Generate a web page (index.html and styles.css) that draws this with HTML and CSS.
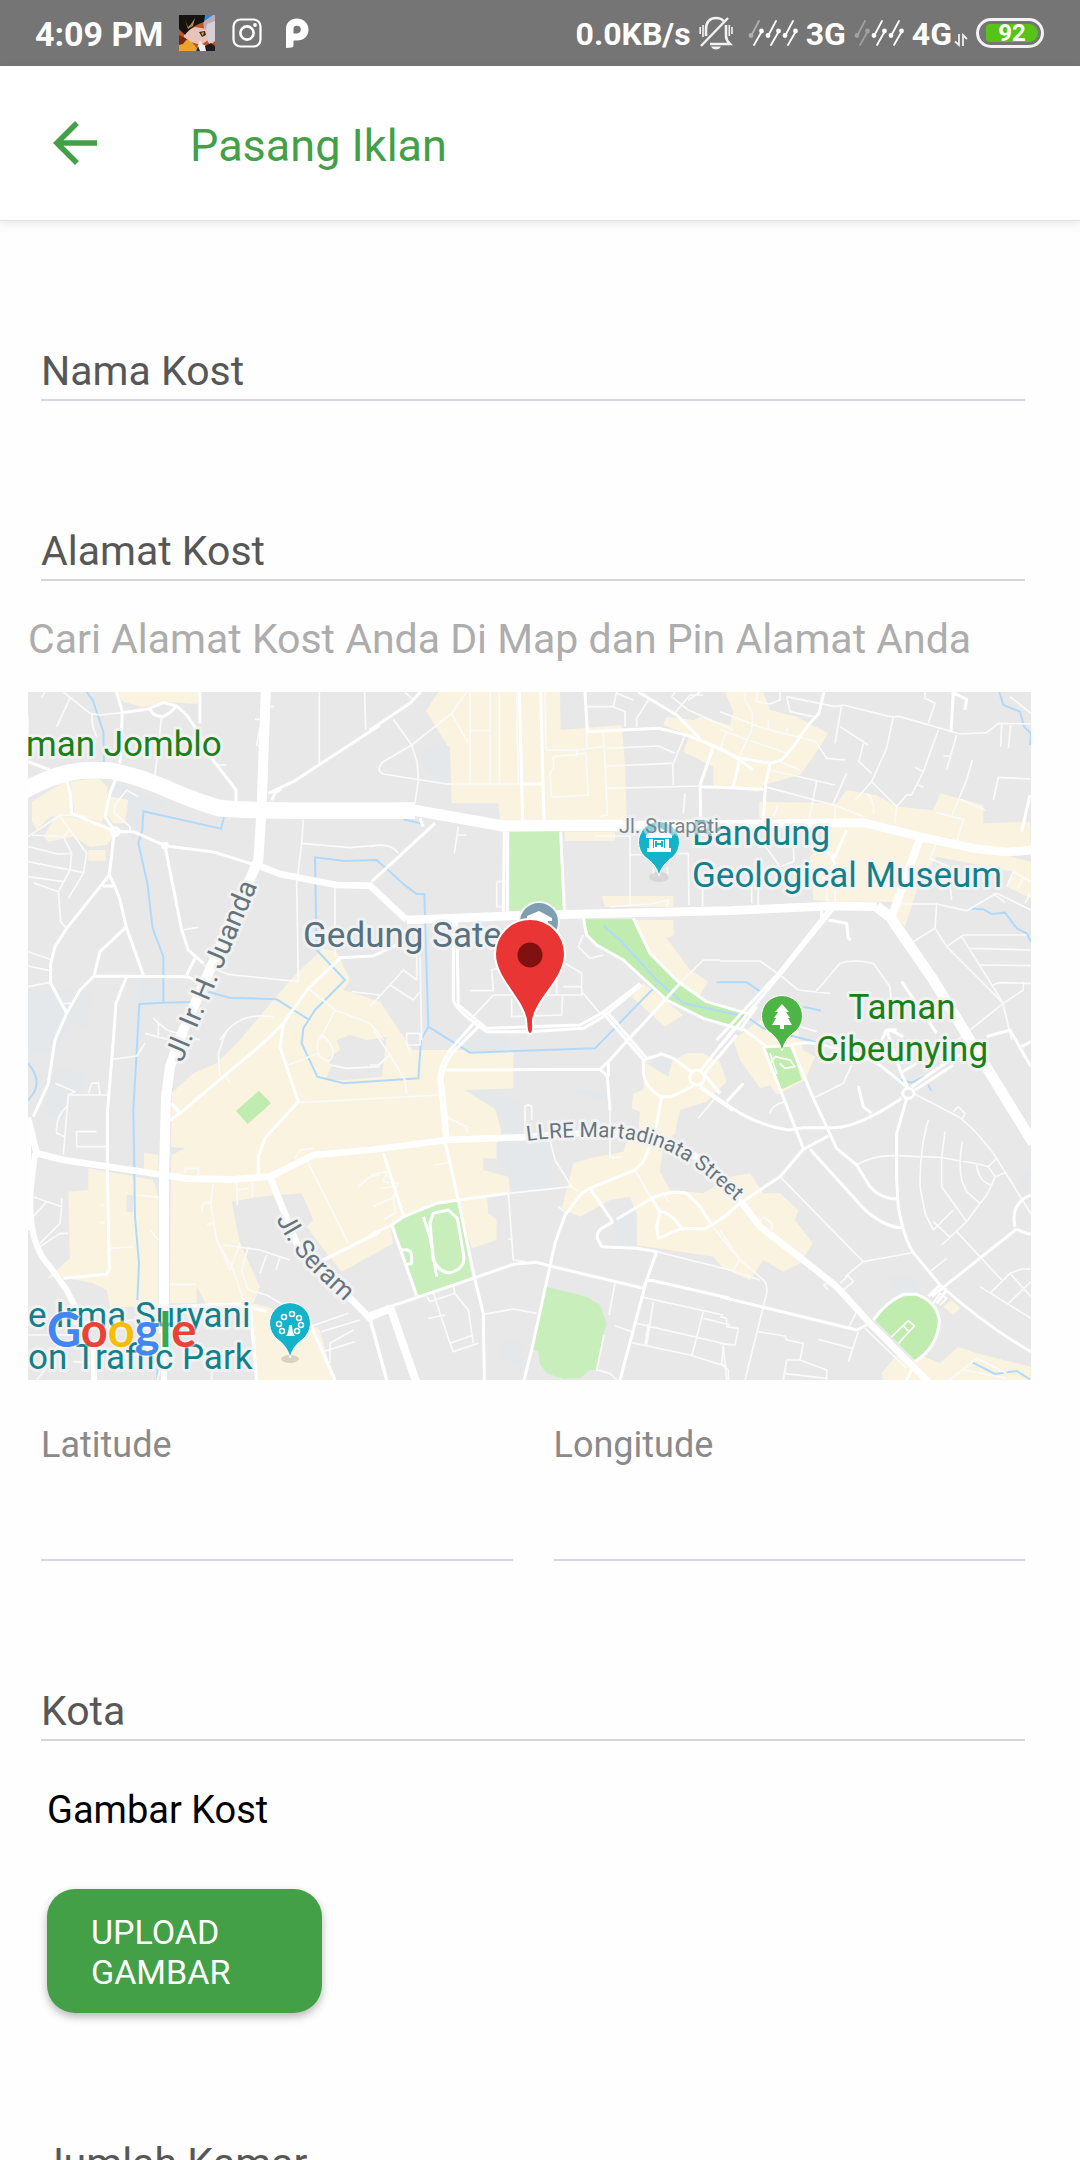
FILE: index.html
```html
<!DOCTYPE html>
<html lang="id">
<head>
<meta charset="utf-8">
<meta name="viewport" content="width=device-width, initial-scale=1">
<title>Pasang Iklan</title>
<link rel="stylesheet" href="styles.css">
</head>
<body>
<div class="app">
  <div class="status">
    <div class="status-left">
      <span class="status-time">4:09 PM</span>
      <svg class="avatar" viewBox="0 0 36 36" aria-hidden="true">
        <rect width="36" height="36" fill="#c4561c"/>
        <path d="M0 36V22L12 26L20 36Z" fill="#e9a52c"/>
        <path d="M0 20L8 24L4 29L0 30Z" fill="#7c2412"/>
        <path d="M23 0H36V22L26 20Z" fill="#b9aab8"/>
        <path d="M28 9L36 6V26L31 30L26 22Z" fill="#d9cfd6"/>
        <path d="M5 17L16 12L28 14L29 25L22 30L12 27L5 22Z" fill="#e9c2ba"/>
        <path d="M6 15L24 7L34 0H26L18 3Z" fill="#2f86d6"/>
        <path d="M0 0H26L25 7C18 9 10 14 6 20L0 14Z" fill="#15130f"/>
        <path d="M6 5L9 12L12 9L16 3L14 11L9 14Z" fill="#b08a4a"/>
        <path d="M20 17L26 16L27 20L23 22Z" fill="#3a2b20"/>
        <path d="M22 18L25 17L24 21Z" fill="#d3a448"/>
        <path d="M17 36L21 25L23 29L27 31L28 36Z" fill="#f2eef0"/>
        <path d="M27 36L26 31L32 28L36 31V36Z" fill="#1d1b22"/>
        <path d="M17 36L19 31L21 36Z" fill="#252a3a"/>
      </svg>
      <svg class="icon-insta" viewBox="0 0 30 30" aria-hidden="true">
        <rect x="1.5" y="1.5" width="27" height="27" rx="7" fill="none" stroke="#fff" stroke-width="2.2"/>
        <circle cx="15" cy="15" r="6.6" fill="none" stroke="#fff" stroke-width="2.6"/>
        <circle cx="23" cy="7" r="1.9" fill="#fff"/>
      </svg>
      <svg class="icon-p" viewBox="0 0 24 30" aria-hidden="true">
        <path fill="#fff" fill-rule="evenodd" d="M1 30V11.500C1 4 6 .5 12 .5S23.500 5 23.500 11.500 19 22.500 12 22.500H8.500V27.500Q8.500 29.500 6.500 29.500ZM8.500 15.500H12Q15.800 15 15.800 11.500T12 7.700 8.500 11.500Z"/>
      </svg>
    </div>
    <div class="status-right">
      <span class="net">0.0KB/s</span>
      <svg class="icon-bell" viewBox="0 0 34 34" aria-hidden="true">
        <g fill="none" stroke="#f2f2f2">
          <path stroke-width="2.6" d="M7 20V13C7 6 11 2 17 2 20 2 23 3 24.500 5M27 9V20Q27 24 31 28H11"/>
          <path stroke-width="2.4" d="M29 2L2 30"/>
          <path stroke-width="1.600" d="M1.200 11V18M4 9V21M30.300 9V20M33 11V18"/>
        </g>
        <path fill="#f2f2f2" d="M12 30.500H22Q20.500 33.500 17 33.500T12 30.500Z"/>
      </svg>
      <svg class="icon-signal" viewBox="0 0 50 28" aria-hidden="true">
        <g stroke="#b0b0b0" fill="#b0b0b0" stroke-width="1.800" stroke-linecap="round"><path d="M11 2L3 17"/><circle cx="3" cy="16.500" r="1.500"/></g>
        <g stroke="#fff" fill="#fff" stroke-width="1.800" stroke-linecap="round"><path d="M14 12L6 26M28 2L20 17M31 12L23 26M45 2L37 17M48 12L40 26"/><circle cx="13.500" cy="12" r="1.500"/><circle cx="20" cy="16.500" r="1.500"/><circle cx="30.500" cy="12" r="1.500"/><circle cx="37" cy="16.500" r="1.500"/><circle cx="47.500" cy="12" r="1.500"/></g>
      </svg>
      <span class="net">3G</span>
      <svg class="icon-signal" viewBox="0 0 50 28" aria-hidden="true">
        <g stroke="#a0a0a0" fill="#a0a0a0" stroke-width="1.800" stroke-linecap="round"><path d="M11 2L3 17M14 12L6 26"/><circle cx="3" cy="16.500" r="1.500"/><circle cx="13.500" cy="12" r="1.500"/></g>
        <g stroke="#fff" fill="#fff" stroke-width="1.800" stroke-linecap="round"><path d="M28 2L20 17M31 12L23 26M45 2L37 17M48 12L40 26"/><circle cx="20" cy="16.500" r="1.500"/><circle cx="30.500" cy="12" r="1.500"/><circle cx="37" cy="16.500" r="1.500"/><circle cx="47.500" cy="12" r="1.500"/></g>
      </svg>
      <span class="net">4G</span>
      <svg class="icon-arrows" viewBox="0 0 14 14" aria-hidden="true"><path d="M5 1V12L1 8.500M9 13V2L13 6" fill="none" stroke="#eee" stroke-width="1.800"/></svg>
      <span class="battery"><span class="battery-fill">92</span></span>
    </div>
  </div>

  <header class="topbar">
    <button class="back" type="button" aria-label="Kembali">
      <svg viewBox="0 0 24 24" aria-hidden="true"><path fill="#43a047" d="M20 11H7.830l5.590-5.590L12 4l-8 8 8 8 1.410-1.410L7.830 13H20v-2z"/></svg>
    </button>
    <h1 class="title">Pasang Iklan</h1>
  </header>

  <main class="content">
    <form class="form">
      <div class="field"><label for="nama">Nama Kost</label><input id="nama" type="text"></div>
      <div class="field"><label for="alamat">Alamat Kost</label><input id="alamat" type="text"></div>
      <p class="hint">Cari Alamat Kost Anda Di Map dan Pin Alamat Anda</p>

      <svg class="map" viewBox="0 0 1003 688" role="img" aria-label="Peta">
        <defs>
          <path id="street-martadinata" d="M499 449Q545 443 589 446C632 450 662 466 704 506L740 540"/>
          <path id="street-seram" d="M248 527Q264 560 288 583L345 636"/>
        </defs>
        <rect width="1003" height="688" fill="#e8e8e8"/>
        <g transform="scale(.33333)">
          <!-- built-up and institutional areas -->
          <g transform="translate(-24 -36)">
            <path class="yellow" d="M295 36H540L535 72 440 66 365 82 305 62ZM150 305L235 293 262 320V385L245 425 165 405ZM35 365L140 300 160 405 90 410 50 450 36 425ZM70 470L110 405 240 425 290 455 260 495 210 500 160 470 85 485ZM275 350L325 360 315 430H280L255 400ZM205 510H257V542H205Z"/>
            <path class="blue" d="M285 310L330 320 432 370 420 390 370 400 350 460 330 430 325 360 275 345ZM355 895L430 890V965H360ZM24 930L220 930 200 1040 150 1030 110 1120H24Z"/>
          </g>
          <g transform="translate(1026 -36)">
            <path class="yellow" d="M205 36H570L572 150 755 135 765 250 770 420H390L385 370H245L240 210 168 92ZM585 455H735V482H585ZM695 648H910V680H705ZM795 720H910L912 765 890 775 960 870 1015 905 990 945 930 910 840 820ZM785 950L820 910 940 1005 885 1040Z"/>
            <path class="blue" d="M140 240L200 190 240 200V300L180 285Z"/>
            <path class="green" d="M418 455L568 453 580 690 418 692Z"/>
            <path class="green2" d="M640 718H790L840 820 930 910 1000 960 1080 985 1130 1000 1110 1045 1080 1035 1000 1015 890 960 760 840 660 780Z"/>
          </g>
          <g transform="translate(2076 -36)">
            <path class="yellow" d="M15 36H130L150 90 230 110 325 160 280 230 240 285 130 315 115 335-20 320V260L-110 215-90 165-170 135-160 110-80 120-60 110 30 135 40 95ZM118 365L350 370 380 330 470 345 530 380 640 390 660 340 790 375V430L930 425 933 500 800 520 600 465 400 420 118 415ZM270 530L340 440 460 430 660 480 933 545V655L860 620 880 575 650 530 600 600 555 740 520 710V665H345L280 660Z"/>
          </g>
          <g transform="translate(-24 1014)">
            <path class="yellow" d="M455 190L520 130 590 100 660 30 760-90 830-170 910-245 950-235 990-150 970-120 1080-85 1130-10 1180 60H1480V175L1340 180 1365 200 1425 235 1445 305 1430 340V385H1390V420L1465 440 1475 490 1400 500 1405 550 1430 570V630L1355 655 1315 510 1110 585 1120 640 965 725 905 650 860 590 880 570 845 490 720 500 635 515 660 640 720 770 700 820 810 850 900 900 940 1050H710L690 840 560 825 530 770V820H450ZM205 415L400 450 415 500V830H270L260 780 220 760 120 740 80 745 150 685 145 485 205 480ZM372 368L415 375V425L372 420Z"/>
            <path d="M915 150L935 110 925 85 960 60 950 30 990 15 1040 30 1100 20 1085 140 980 150ZM450 350L495 355 450 378ZM320 495H340V545H320Z" fill="#e8e8e8"/>
            <path class="blue" d="M100 110L190 130 185 185 150 190 130 270 70 250Z"/>
            <path class="green2" d="M648 243L717 182 753 220 683 282Z"/>
          </g>
          <g transform="translate(1026 1014)">
            <path class="yellow" d="M575 535L610 400 660 385 760 365 775 320 805 310 810 245 785 235 790 190 820 180 825 95 900 95 950 70H1000L1050 95 1070 155 1010 215 930 240 915 310 880 345 870 425 900 480 1000 490 1080 440 1140 430 1180 490 1230 490 1285 540 1275 570 1328 640 1290 700 1240 725 1180 690 1140 750 1060 715 1030 680 800 645V555L780 500 720 510 630 560Z"/>
            <path class="yellow" d="M1090 30L1170-30 1280-10 1300 60 1335 80 1305 150 1220 195 1200 165 1170 175 1110 90Z"/>
            <path class="blue" d="M285 180H340L460 215 465 320 540 330 550 470 420 485 415 430 380 380V340L395 305 380 240ZM600 180H720V220ZM250 10L400 0 430 60 300 70ZM830 100L910 80 895 140ZM730 560L780 510 800 550V650L740 640ZM395 930L460 935V1000L390 990Z"/>
            <path class="green" d="M70 580L190 525 265 515 305 740 145 797ZM528 770L650 800 690 825 710 880 700 915 680 1020 660 1020 630 1045 580 1047 530 1030 508 1000 505 965 485 958Z"/>
          </g>
          <g transform="translate(2076 1014)">
            <path class="yellow" d="M485 1030L530 975 560 1000 600 975 660 1000 715 950 770 970 850 990 933 1010V1050H490ZM670 830L695 810 720 835 700 855Z"/>
            <path class="blue" d="M500 735H575L590 785 540 790ZM890 450L933 420V490L900 495Z"/>
            <path class="green2" d="M465 870C500 820 540 795 590 795 640 800 655 840 655 880 655 930 620 965 585 990ZM130 55L215 50 245 150 185 178Z"/>
          </g>

          <!-- waterways -->
          <g class="water">
            <path transform="translate(-24 -36)" d="M200 36L218 60 250 155 252 250M612 412L603 446 370 394 367 450 355 490 382 610 398 745 430 830V968M520 966L430 968 358 972 352 1080 340 1290 345 1610 357 1750 352 1860M565 935L628 953 770 958 865 1018M1080 550L1070 540 975 543 885 532 890 810 975 900 885 990 850 1045 845 1090 892 1190 970 1210 1195 1195 1203 1080 1225 1040"/>
            <path transform="translate(1026 -36)" d="M0 540H20L110 620 140 642H163L175 1040 300 1118 675 1105 860 915M100 418L150 430M700 737L750 780 860 900 940 970 1130 1010 1180 1045 1390 1100 1490 1130 1590 1200 1625 1208 1662 1190M1040 907H1130L1180 940M1300 980L1353 992M1675 1215L1683 1232"/>
            <path transform="translate(2076 -36)" d="M838 36L850 75 900 95 912 140 933 160 930 195M755 686L790 688 815 702 855 698 890 745 920 760 933 785M757 2047L825 2082 890 2073 930 2098"/>
            <path transform="translate(-24 1014)" d="M24 100C50 130 65 170 24 210M412 1050V980"/>
          </g>

          <!-- lanes -->
          <g class="road thin">
            <path transform="translate(-24 -36)" d="M24 200V110M130 36L210 100 240 105 305 98M150 55L110 140M215 100L218 140 230 170M75 36L65 52M425 110L405 285M24 470L120 405 200 410M36 465L130 470 150 450 120 410M130 470L155 520 150 570 115 635 40 608M24 500L115 522 155 520M24 545L190 578M24 590L130 605M145 655L190 580 200 520 150 450M115 635L122 725 140 745M282 400L285 375 320 330 355 350M285 400L330 440V455M485 750L535 742M898 36V250M1034 36L1037 150M762 80H745M705 118H720M720 140L710 195 722 200M590 255L620 255M850 418L845 490 830 610 835 905M845 490L990 503 1080 495M945 625V830M550 855L625 883 835 905M24 815L90 838M24 858L90 872M24 920L90 907M400 1015L440 1050 540 1080M415 1030V1075M375 1060L470 1085M600 1080C640 1020 680 1000 760 1010M995 935L1080 945M865 925L945 990 1050 1030 1090 1080M945 990L900 1080M130 970H155"/>
            <path transform="translate(1026 -36)" d="M105 36L130 60M70 118L125 195 142 250 145 300 135 370M125 195L40 245Q15 270 40 282L230 312H510M290 36L245 100 125 195M245 100L295 190M300 36V312M360 36V312M388 36V312M300 152H360M440 36L445 312M525 36L528 210H620L700 200M550 230L648 220 655 345 545 352 540 280 550 265ZM620 210V230M650 80H730L765 95V140M740 36L730 80M740 40L790 60M835 60L800 115V140M700 155L705 250 712 405 690 410M710 205L865 198 915 220M710 258L905 250M945 165L908 255 910 315M710 325L990 318M650 155V205M945 340L940 400M265 440L253 520M260 465H290M0 500Q60 485 85 520M675 468H780V680M780 525L955 520 957 675M998 600V680M380 605H410M380 605V680H400M850 590V560M893 590V560M720 680L840 672 895 660 890 680M640 765L625 800 660 835 700 825M1050 840H1000L930 910M905 50L955 90 1090 150M905 50L915 36M910 105L960 45 1000 45M990 36L955 60"/>
            <path transform="translate(1026 -36)" d="M140 780V900L100 870 60 915 130 960 150 935M60 915L0 980M150 830L155 1080M300 932H370L365 870 400 860M370 945H635V880L585 850M580 920H635M425 955V1010L575 1005 578 945M560 860V945M370 945L300 1020M635 935L690 1000"/>
            <path transform="translate(2076 -36)" d="M110 36V65L150 72 180 60V36M75 36V60L98 100 95 150 55 235M0 95L130 145 290 185M0 150L200 220M20 155L0 210M145 120V150M200 145V165M290 190L320 235 375 240M180 245L240 270M200 50L210 95 280 110M200 50L345 80 370 75 510 110 540 110 720 162 800 158 835 130 933 132M365 75L345 190M360 140L445 195M430 190L417 245 455 280M520 110L500 205 455 305 405 362M455 305L530 380 525 430M655 150L610 275 575 345H560L530 380M585 262L610 275M595 315L610 322M615 36V55L645 70 625 130M710 165L680 270M670 228H690M757 240L740 300 695 408M650 398L730 418 712 480M715 355L795 390M933 297L835 292 820 360M845 130L842 200M872 135L865 205M870 50L933 100M135 320L350 378 430 410M150 270L345 315M290 305L268 415M380 280L340 370M345 380V415M440 340Q465 360 460 400M175 375L160 410M130 490L180 560 220 545M220 500L222 545M115 560V675M95 670V600M320 665V600M345 670V600M650 490L628 535 690 560M690 610L695 660M520 672H650L645 745 575 788M645 745L680 800 850 970 910 930V905M650 672L740 692 830 640 933 690M820 640L855 668M920 765H730L680 800M745 805L933 810M780 855L933 857M820 915L835 908 933 910M725 770L850 970 800 1010 700 1090M850 975L875 1080M0 843H120L180 885 235 930 330 940M285 938L360 850Q400 835 460 850L510 920 515 980M240 1040L290 1055M860 620L880 575 933 605M895 625L910 590M930 640L915 670"/>
            <path transform="translate(-24 1014)" d="M105 160L165 185 145 195 130 375M150 195L262 195M205 190L215 160 235 158 240 195M275 88L350 78 375 40M230 305H170V350H262M145 225Q105 260 110 310L135 320M40 500L80 515 40 560M80 515L125 530 120 580 60 640M125 505V530M120 610H145M60 650L120 610M240 525H255M240 578H255M350 495L415 502M268 655L340 650M390 600L415 630M580 460L572 520 590 630 640 720 670 810M545 548L550 518H572M560 583L585 578M590 630L630 720 660 640M610 645L720 660 810 690M650 455L652 525M697 500V455M650 480L685 475M685 650L665 720 685 780 740 795 830 850M740 675L720 730M780 680L768 720M600 140L595 70 620 0M615 135L630 160M805 105L895 70M905 15Q940 40 940 70 930 110 900 80 880 40 905 15ZM930 105L980 115 1080 110M835 218L1260 195M860 390L985 640M1015 470L1050 440 1080 435M1060 530L1080 520M450 763H528M495 430V415H535V435M825 385L840 360 880 355M870 890L985 850M905 905L1020 870M930 1000V940L1000 900M910 965L1005 935M575 950V1050M24 915H160M50 1050L90 1000M160 995L230 1000M420 1020L412 1050M160 880L350 870"/>
            <path transform="translate(1026 1014)" d="M10 0L60 75 105 150 110 190M60 75L25 105H0M110 10H150V45H110ZM110 45L122 70M220 215L235 265 290 290 292 310M195 405L240 397M465 320V230Q475 220 485 230V270M540 330L555 390 605 470M720 240V382H755M415 490L605 470 625 485M415 490L430 690 465 695M415 627H425M565 530L590 550M0 435L50 425 40 455 85 460 70 500 75 550 40 570M30 475L70 470M10 530L75 500M170 800L180 815 255 790 250 770M175 865L225 855M190 790L240 940 250 965 325 940M250 785L295 840 310 940M240 940L310 915M340 853L430 837 500 850M735 760L717 855M735 887L785 905M702 915L680 1020 720 1030 740 1050M810 800L1060 855M800 880L1080 945M850 815L830 945M785 938L960 975 1070 1010M1000 845L965 980M1060 945L1055 1000 1075 1020V1050M1000 865L1080 885M835 880L825 945M0 880L50 1050M795 420L870 550M985 265L1035 205M845 500L880 490 895 515M1025 585L1080 655 1110 690M860 665L1080 720 1170 750"/>
            <path transform="translate(2076 1014)" d="M150 250Q155 225 195 215M280 205L370 160 395 105M180 440L430 695 540 675 580 668M430 695L375 740M360 760L385 738 400 755 370 780M310 765L340 755M310 765L325 780M580 190L715 260Q770 300 830 385L935 555M700 245L715 230 735 250 725 270M410 405Q460 375 530 377L660 382 775 402 805 410 830 385M625 270Q600 350 600 470L617 555 640 600 700 540M675 305L665 385V470L740 575M727 335Q715 400 725 450L740 485 780 520M770 405Q775 455 815 465L825 440 855 428M825 440L805 410M815 465Q800 500 780 520L740 575 665 645M640 575L690 622M710 605L845 750M630 725L680 685M780 770L933 865M810 790L870 730 905 717H933M870 730L933 800M865 820L933 755M410 845L385 895M415 905L385 995M295 928L395 955M435 895L560 1015M115 905L195 918 200 930 250 940 240 990 320 1020V1050M190 1050L200 990 240 990M190 1030L320 1045M0 860L20 865V890L55 895 45 945 0 940M10 950L20 1050M0 600L60 690 125 745Q145 760 140 790L75 1050M40 720L60 685M730 1020L860 1045M690 1050L770 985 860 1030M120 575L130 560 155 580V600M0 1000L20 1015"/>
            <path transform="translate(2076 1014)" d="M515 920L565 872 583 888 535 940M550 888L565 903M640 820L660 790 680 805 660 825M150 100L165 80 210 90 225 110 195 115 180 100M150 70L170 130 160 135" stroke="#fff"/>
          </g>

          <!-- streets -->
          <g class="road street">
            <path transform="translate(-24 -36)" d="M290 36L307 95 300 250M307 98L380 88 430 68 470 78 500 105 530 150 575 235 648 330V370M390 88Q400 110 430 110 450 100 470 78M540 36L540 130M24 245L90 270M140 300L152 345 155 400 285 455 340 455 435 497 585 517 700 553M290 290L270 340 255 410 285 455 280 480 268 585 140 745 105 800 92 850V910L140 1000 105 1080 85 1210 40 1310M268 585L285 620 300 660 320 745 370 885M248 618H285M435 497L485 750 505 810 550 850M320 740L240 815 222 888 500 890 540 905M222 888L180 930 140 1000M320 890L288 970 280 1080 262 1300 262 1470 268 1770 260 1783 130 1795M500 885L525 835M745 340L820 305 1080 135M755 360L765 340 785 325M960 835L865 925 790 1030 740 1080 480 1300 455 1270M955 833L1060 828 1140 790M790 1030L780 1100 835 1265 735 1375 715 1430V1490M450 1320L480 1300 460 1280"/>
            <path transform="translate(1026 -36)" d="M0 150L120 70 152 36M195 430L5 605M150 415L160 440M403 455L400 695M413 455L412 695M572 455L583 690M448 36L458 420M512 36L522 420M455 312H520M645 36L652 155 865 145 950 165 1050 205 1110 240 1150 270M805 36L920 105 990 175M1030 200L990 315 992 420M990 320L1050 322M640 715L650 765 680 795 760 840 890 960 1000 1015 1120 1050M790 715L840 820 930 910 1010 965 1130 1000M885 960L930 910M250 720L250 960Q255 990 350 1055H480L640 1045 700 1010 815 915M260 720L265 975 350 1045 630 1035 695 1000 810 910M700 1000L820 1140M715 1000L830 1135M770 1085L885 960M320 1020L240 1110Q205 1160 207 1200L225 1380M335 1030L250 1115Q215 1165 217 1200L235 1380"/>
            <path transform="translate(2076 -36)" d="M312 36L297 100 265 135 220 200 185 240 150 250 60 235-50 185M60 235L40 320M150 250L137 310 130 420M0 322L130 328M695 36L740 58 735 90M700 36L693 155M380 450L345 530 330 520 345 550 320 590M330 520L290 500M930 345L905 455M338 690L180 885 0 1100M325 690L175 880-10 1080M305 690V720M325 720L380 730 385 775 392 780M60 1050L110 980M545 905L650 1060M490 1060L510 1050 550 1070M485 1080L500 1050"/>
            <path transform="translate(1026 1014)" d="M225 120L690 118 720 90 800 0M690 118L712 138 720 240M715 95V140M820 90V130Q830 180 875 200L905 200 970 168M820 90L875 72 910 85 965 125M875 200L855 310 820 395 795 420 660 475 635 490 585 555 555 640 485 960 462 1050M660 475L728 575M0 615L65 585 100 560 200 520 265 510 415 490M225 335L265 510 315 750 340 850 343 1050M40 370L100 555M65 585L140 797M0 850L60 830 310 745 430 703 500 697 540 708 820 775M740 568L845 505Q900 480 950 490L990 530 1025 585 1080 550M730 575L695 595Q680 605 682 625L695 650 800 655 860 665 830 750 750 1050M845 505L870 545 860 590 865 625 935 595 1005 597 1025 585M870 545Q900 545 935 595M830 748L1080 805M820 775L830 750M180 580L190 690Q210 730 240 728 290 715 280 670L262 565 235 540 190 550ZM160 560L180 620 200 740M95 660Q125 655 125 680V700L105 705"/>
            <circle cx="2007" cy="1157" r="22"/>
            <path transform="translate(2076 1014)" d="M-60 125L30 10 60-20M-50 135L50 15M0 210Q100 285 205 300L250 293H345Q420 290 545 205M20 215L70 160M415 168L430 230 455 250M0 570L60 520 180 440 250 358 325 318M130 50L195 215 250 355M215 50L280 205 350 355 410 405 450 470Q480 505 530 507M270 358L435 540Q500 595 550 593M560 205L530 310V450L535 530Q550 620 580 668L660 765Q800 890 933 965M565 175L540 120 500 0 530 0M565 175Q500 120 470 100 400 60 330 50 260 30 215 45L140 50 60-10M575 170L690 90 790 40M585 180L700 105M540 130L590 100M0 800L410 900 440 885M635 800L890 597M885 590Q870 520 933 495M890 597Q910 610 933 613M460 870Q500 815 550 793H590Q650 815 658 870 655 950 585 995M625 800L660 765M650 820L680 780M560 1050L575 1020M800 20L870 0 933 110M905 50L933 35"/>
            <ellipse transform="translate(2076 1014)" cx="565" cy="190" rx="17" ry="15"/>
            <circle transform="translate(-24 -36)" cx="285" cy="455" r="12"/>
            <circle transform="translate(-24 -36)" cx="435" cy="497" r="7"/>
          </g>

          <!-- main roads -->
          <g class="road main">
            <path stroke-width="50" transform="translate(-24 -36)" d="M0 338C120 272 180 266 270 272 400 295 470 350 600 385 700 395 900 392 1185 392"/>
            <path stroke-width="34" transform="translate(1026 -36)" d="M130 390L400 438 620 436 760 436"/>
            <path stroke-width="26" transform="translate(2076 -36)" d="M-300 436L430 428 600 470 760 505 860 516 940 510"/>
            <path stroke-width="30" transform="translate(-24 -36)" d="M738 20L724 400 715 540 490 1050 450 1160 438 1250 432 1480V1960"/>
            <path stroke-width="20" transform="translate(-24 -36)" d="M700 550L780 582 950 615 1050 617 1160 720"/>
            <path stroke-width="26" transform="translate(1026 -36)" d="M110 720L460 706 1080 692 1380 678 1520 680"/>
            <path stroke-width="32" transform="translate(2076 -36)" d="M470 680L510 710 640 900 780 1130 940 1390"/>
            <path stroke-width="24" transform="translate(2076 -36)" d="M605 460L515 710"/>
            <path stroke-width="20" transform="translate(-24 1014)" d="M24 265L50 370 130 390 432 435 500 446 640 448 750 440 880 375 1050 360 1280 330 1500 322C1650 315 1760 290 1950 340 2050 380 2110 440 2160 510L2220 590 2350 690 2450 770 2550 880 2740 1070"/>
            <path stroke-width="18" transform="translate(-24 1014)" d="M24 262V600M45 370L32 480C25 600 50 670 90 710L140 780 180 860M222 1050V950M432 1060V860"/>
            <path stroke-width="20" transform="translate(-24 1014)" d="M750 440L830 640 1050 865"/>
            <path stroke-width="24" transform="translate(1026 1014)" d="M60 830L140 1060M-10 865L60 835"/>
            <path stroke-width="10" transform="translate(-24 1014)" d="M880 705L1080 605M455 830L660 822 740 845M1050 865L1100 1050M870 880L945 1050M690 830L710 1050"/>
            <path stroke-width="10" transform="translate(2076 1014)" d="M-50 130L0 190"/>
            <path stroke-width="13" transform="translate(1026 1014)" d="M990 170L1090 240"/>
          </g>
        </g>

        <!-- place labels -->
        <g class="label road-label">
          <text font-size="28" transform="translate(154 371) rotate(-67)">Jl. Ir. H. Juanda</text>
          <text font-size="26"><textPath href="#street-seram">Jl. Seram</textPath></text>
          <text font-size="21"><textPath href="#street-martadinata">LLRE Martadinata Street</textPath></text>
        </g>
        <text class="label place park" x="-2" y="64">man Jomblo</text>
        <g class="label place park" text-anchor="middle">
          <text x="874" y="327">Taman</text>
          <text x="874" y="369">Cibeunying</text>
        </g>
        <g class="label place attraction">
          <text x="664" y="153">Bandung</text>
          <text x="664" y="195">Geological Museum</text>
          <text x="0" y="635">e Irma Suryani</text>
          <text x="0" y="677">on Traffic Park</text>
        </g>
        <text class="label place civic" x="275" y="255">Gedung Sate</text>

        <!-- museum pin -->
        <ellipse cx="631" cy="185" rx="10" ry="5" fill="#ccc" opacity=".6"/>
        <path d="M631 184Q629 173 617 165A20.500 20.500 0 1 1 645 165Q633 173 631 184Z" fill="#14b3ca" stroke="#fff" stroke-width="1"/>
        <path d="M618 143L631 135 644 143V146H618ZM621 147H625V156H621ZM637 147H641V156H637ZM619 156H643V160H619ZM626 148H636V156H626Z" fill="#fff"/>
        <path d="M628 149V155M634 149V155M628 152H634" stroke="#14b3ca" stroke-width="2"/>
        <text class="label street-fade" font-size="20" x="591" y="141">Jl. Surapati</text>

        <!-- park pin -->
        <path d="M754 359Q751 346 740 339A20.500 20.500 0 1 1 768 339Q757 346 754 359Z" fill="#4db546" stroke="#fff" stroke-width="1"/>
        <path d="M754 312L761 320H758L762 326H760L764 333H756V337H752V333H744L748 326H746L750 320H747Z" fill="#fff"/>

        <!-- traffic park pin -->
        <ellipse cx="262" cy="667" rx="9" ry="4" fill="#d9d2c0"/>
        <path d="M262 666Q260 655 249 647A20.500 20.500 0 1 1 275 647Q264 655 262 666Z" fill="#14b3ca" stroke="#fff" stroke-width="1"/>
        <path d="M258 644Q261 640 261 633H264Q264 640 267 644Z" fill="#fff"/>
        <g fill="none" stroke="#fff" stroke-width="1.500"><circle cx="254" cy="639" r="2.500"/><circle cx="251" cy="632" r="2.500"/><circle cx="256" cy="625" r="2.500"/><circle cx="264" cy="622" r="2.500"/><circle cx="271" cy="626" r="2.500"/><circle cx="273" cy="633" r="2.500"/><circle cx="269" cy="639" r="2.500"/></g>

        <!-- civic building marker and the dropped pin -->
        <circle cx="511" cy="230" r="20" fill="#7e9fb0" stroke="#f5f5f5" stroke-width="2"/>
        <path d="M499 224L511 219 524 226V229H499ZM502 229H506V240H502ZM509 229H513V240H509ZM516 229H520V240H516Z" fill="#fff"/>
        <path d="M502 342C498 342 499 335 498 328 495 307 467 287 467 262A35 35 0 0 1 537 262C537 287 508 307 505 328 505 335 506 342 502 342Z" fill="#ea3535" stroke="#fff" stroke-width="2"/>
        <circle cx="502" cy="263" r="12.500" fill="#811010"/>

        <text class="google" x="19" y="655"><tspan fill="#4285f4">G</tspan><tspan fill="#ea4335">o</tspan><tspan fill="#fbbc05">o</tspan><tspan fill="#4285f4">g</tspan><tspan fill="#34a853">l</tspan><tspan fill="#ea4335">e</tspan></text>
      </svg>

      <div class="coords">
        <div class="coord"><label for="lat">Latitude</label><input id="lat" type="text"></div>
        <div class="coord"><label for="lng">Longitude</label><input id="lng" type="text"></div>
      </div>
      <div class="field"><label for="kota">Kota</label><input id="kota" type="text"></div>

      <h2 class="section">Gambar Kost</h2>
      <button class="upload" type="button">UPLOAD GAMBAR</button>
      <div class="field"><label for="kamar">Jumlah Kamar</label><input id="kamar" type="text"></div>
    </form>
  </main>
</div>
</body>
</html>
```
FILE: styles.css
```css
* { box-sizing: border-box; }

body {
  margin: 0;
  background: #fefefe;
  font-family: Roboto, "Liberation Sans", sans-serif;
}

.app {
  display: flex;
  flex-direction: column;
  height: 100vh;
  overflow: hidden;
}

/* status bar */
.status {
  display: flex;
  flex: none;
  justify-content: space-between;
  align-items: center;
  height: 66px;
  padding: 0 36px 0 35px;
  background: #757575;
  color: #fff;
  font-weight: 700;
  line-height: 40px;
}
.status-left, .status-right { display: flex; align-items: center; }
.status-time { font-size: 34px; margin-right: 16px; padding-top: 2px; }
.avatar { width: 36px; height: 36px; margin-right: 17px; }
.icon-insta { width: 30px; height: 30px; margin-right: 23px; }
.icon-p { width: 24px; height: 30px; }
.net { font-size: 32px; padding-top: 2px; }
.icon-bell { width: 34px; height: 34px; margin: 0 15px 0 8px; }
.icon-signal { width: 50px; height: 28px; margin-right: 8px; }
.net + .icon-signal { margin-left: 8px; }
.icon-arrows { width: 14px; height: 14px; margin: 14px 8px 0 2px; }
.battery {
  width: 68px;
  height: 30px;
  padding: 3px 3px 3px 7px;
  border: 3px solid #f2f2f2;
  border-radius: 15px;
}
.battery-fill {
  display: block;
  height: 18px;
  border-radius: 4px 9px 9px 4px;
  background: #55c416;
  font-size: 24px;
  line-height: 19px;
  text-align: center;
}

/* app bar */
.topbar {
  display: flex;
  flex: none;
  align-items: center;
  height: 155px;
  padding-left: 42px;
  border-bottom: 1px solid #e0e0e0;
  box-shadow: 0 2px 10px rgba(0, 0, 0, .1);
  background: #fff;
}
.back {
  width: 66px;
  height: 66px;
  padding: 0;
  border: 0;
  background: none;
}
.back svg { display: block; width: 66px; height: 66px; }
.title {
  margin: 0 0 0 82px;
  padding-top: 5px;
  color: #43a047;
  font-size: 45px;
  font-weight: 400;
  line-height: 53px;
}

/* form */
.content {
  flex: 1;
  min-height: 0;
  overflow-y: auto;
  scrollbar-width: none;
}
.form { display: flow-root; }
.field {
  display: grid;
  align-items: end;
  height: 180px;
  margin: 0 55px 0 41px;
  border-bottom: 2px solid #d6d6de;
  padding-bottom: 4px;
}
.field > * { grid-area: 1 / 1; }
.field label {
  color: #575757;
  font-size: 41px;
  line-height: 48px;
}
input {
  width: 100%;
  height: 48px;
  padding: 0;
  border: 0;
  outline: 0;
  background: none;
  color: #222;
  font: inherit;
  font-size: 41px;
}
.hint {
  margin: 0 49px 0 28px;
  padding: 34px 0 29px;
  color: #adadad;
  font-size: 41px;
  line-height: 48px;
}
.coords {
  display: grid;
  grid-template-columns: 1fr 1fr;
  gap: 41px;
  margin: 0 55px 0 41px;
}
.coord {
  display: flex;
  flex-direction: column;
  justify-content: space-between;
  height: 181px;
  padding: 44px 0 4px;
  border-bottom: 2px solid #d6d6de;
}
.coord label {
  color: #8a8a8a;
  font-size: 36px;
  line-height: 42px;
}
.section {
  margin: 47px 47px 57px;
  color: #000;
  font-size: 38px;
  font-weight: 400;
  line-height: 44px;
}
.upload {
  display: block;
  width: 275px;
  margin-left: 47px;
  padding: 23px 44px 21px;
  border: 0;
  border-radius: 28px;
  background: #43a047;
  box-shadow: 0 4px 8px rgba(0, 0, 0, .28);
  color: #fff;
  font: 34px/40px Roboto, "Liberation Sans", sans-serif;
  text-align: left;
}

/* map */
.map {
  display: block;
  width: calc(100% - 77px);
  height: auto;
  margin-left: 28px;
}
.yellow { fill: #faf3e0; }
.blue { fill: #e4e8eb; }
.green { fill: #c8efbb; }
.green2 { fill: #c1ecb0; }
.water { fill: none; stroke: #b0dafc; stroke-width: 6; }
.road { fill: none; stroke: #fff; stroke-linejoin: round; }
.thin { stroke: #fafafa; stroke-width: 5; }
.street { stroke-width: 9; }
.label {
  stroke: #f3f3f3;
  stroke-opacity: .85;
  stroke-width: 6px;
  stroke-linejoin: round;
  paint-order: stroke;
}
.place { font-size: 35px; }
.road-label { fill: #66757d; }
.park { fill: #188018; }
.attraction { fill: #12808c; }
.civic { fill: #577180; }
.street-fade { fill: #7b858b; stroke-opacity: .5; }
.google {
  font-family: Lato, "Liberation Sans", sans-serif;
  font-size: 47px;
  font-weight: 700;
  stroke: #fff;
  stroke-opacity: .5;
  stroke-width: 3px;
  paint-order: stroke;
}
```
